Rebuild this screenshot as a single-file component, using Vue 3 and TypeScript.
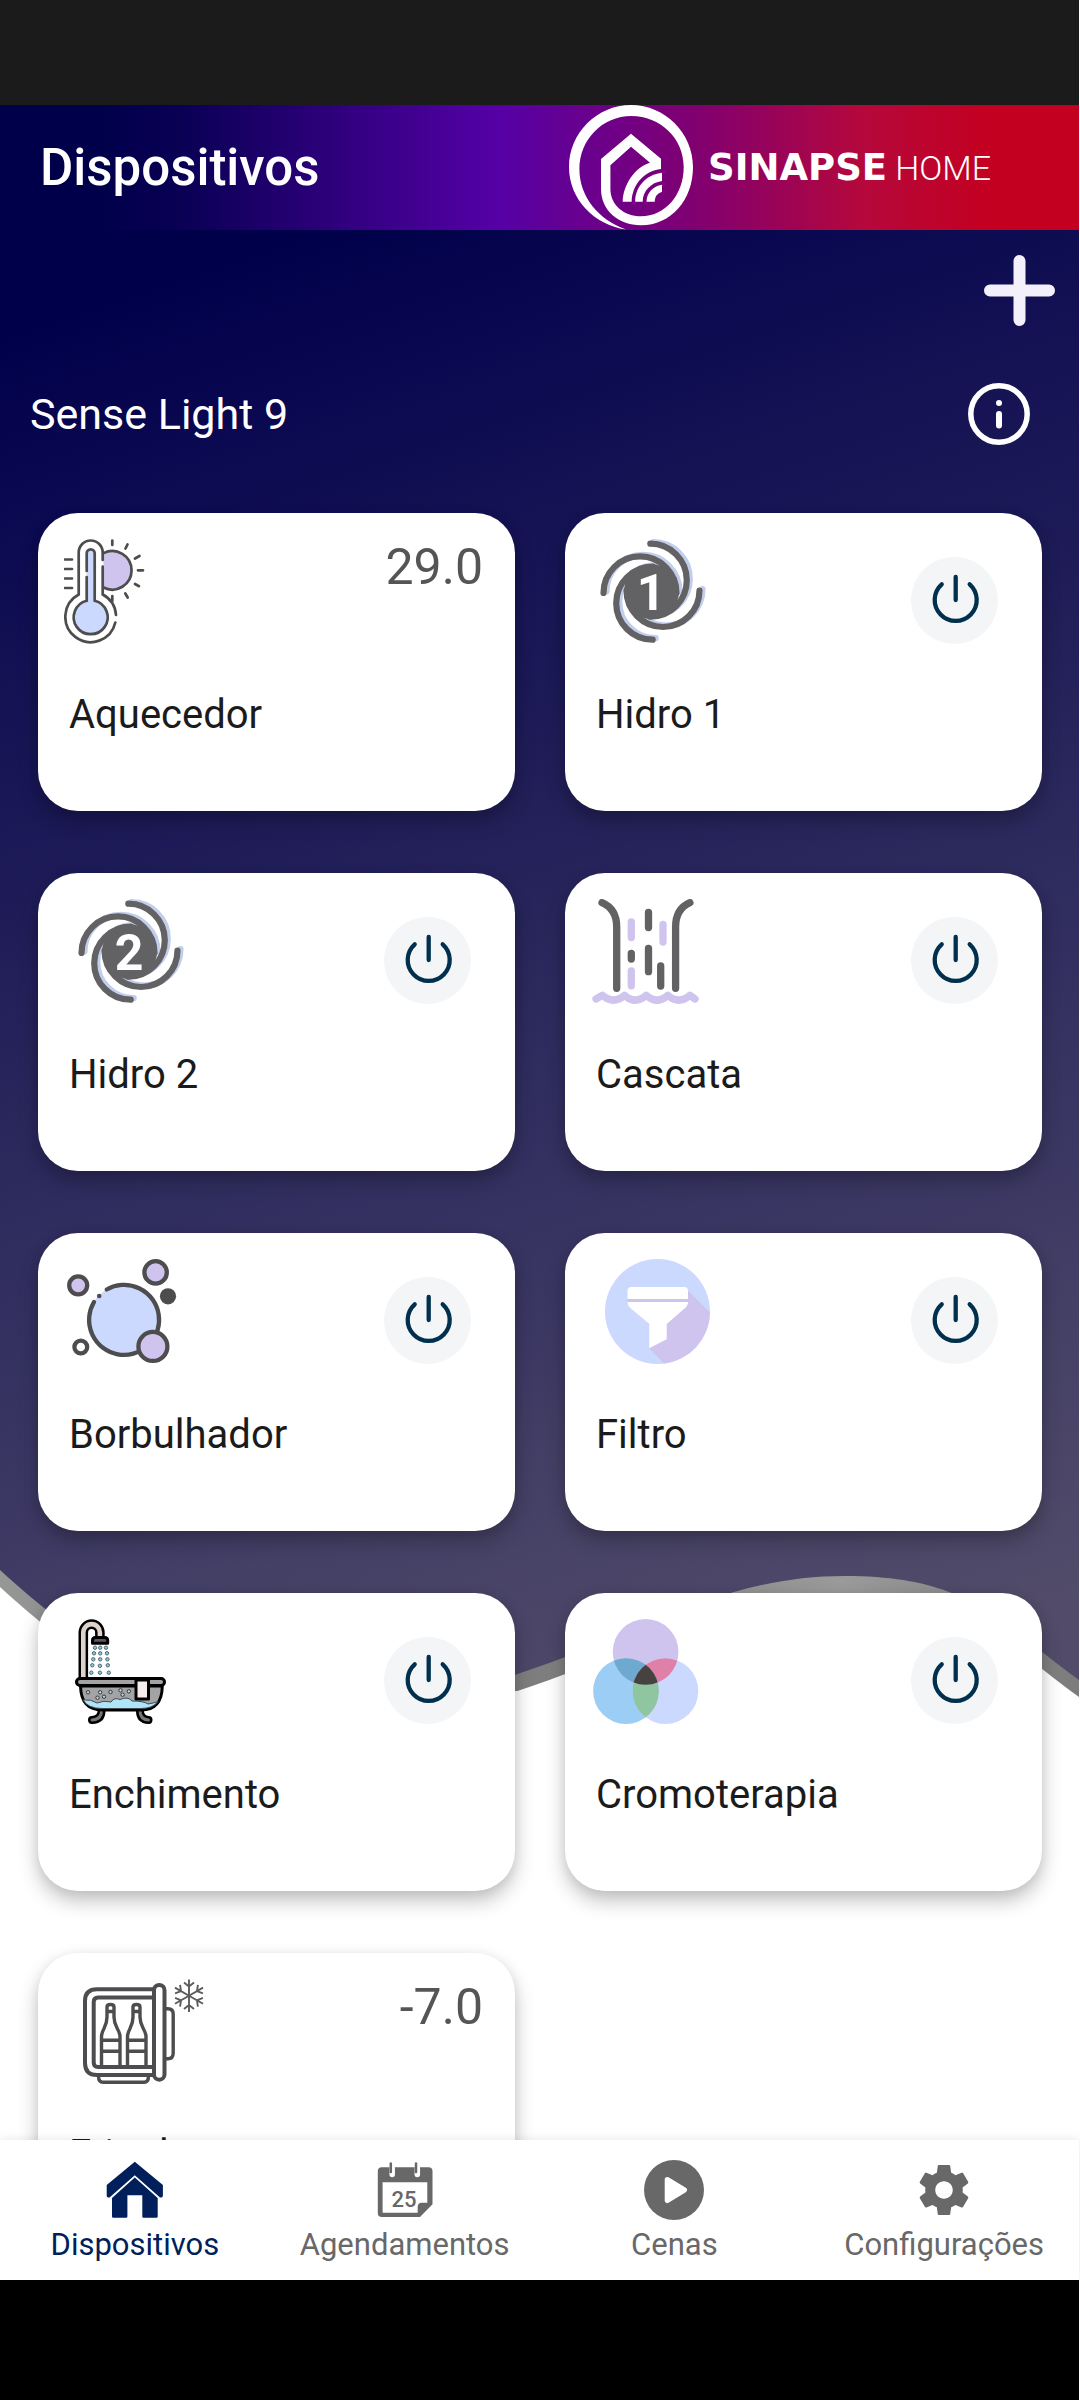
<script setup lang="ts">
import { ref } from 'vue'

type IconName =
  | 'heater'
  | 'swirl'
  | 'cascade'
  | 'bubbles'
  | 'filter'
  | 'bath'
  | 'color'
  | 'fridge'

interface Device {
  id: number
  name: string
  icon: IconName
  digit?: string
  value?: string
  on: boolean
}

const devices = ref<Device[]>([
  { id: 1, name: 'Aquecedor', icon: 'heater', value: '29.0', on: false },
  { id: 2, name: 'Hidro 1', icon: 'swirl', digit: '1', on: false },
  { id: 3, name: 'Hidro 2', icon: 'swirl', digit: '2', on: false },
  { id: 4, name: 'Cascata', icon: 'cascade', on: false },
  { id: 5, name: 'Borbulhador', icon: 'bubbles', on: false },
  { id: 6, name: 'Filtro', icon: 'filter', on: false },
  { id: 7, name: 'Enchimento', icon: 'bath', on: false },
  { id: 8, name: 'Cromoterapia', icon: 'color', on: false },
  { id: 9, name: 'Frigobar', icon: 'fridge', value: '-7.0', on: false },
])

const tabs = [
  { id: 'home', label: 'Dispositivos' },
  { id: 'calendar', label: 'Agendamentos' },
  { id: 'play', label: 'Cenas' },
  { id: 'gear', label: 'Configurações' },
]
const active = ref('home')

const quarterTurns = [0, 90, 180, 270]
const sixthTurns = [0, 60, 120, 180, 240, 300]
const drops: [number, number][] = [
  [31, 28.7], [36.2, 28.7], [42, 28.7],
  [30, 34.3], [36.2, 34.3], [43, 34.3],
  [29.3, 40.3], [36.2, 40.3], [43.4, 40.3],
  [28.3, 46.3], [35.9, 46.8], [43.8, 46.3],
  [27.3, 53.7], [35.9, 53.7], [44.8, 53.7],
]
const foam: [number, number][] = [
  [24, 73.3], [36.2, 73.3], [46.5, 73], [33.5, 78.7], [40, 77.7], [64.8, 72.3], [56.5, 71.3], [58.6, 75.7],
]
</script>

<template>
  <div class="app">
    <div class="status-bar"></div>

    <header class="header">
      <h1 class="title">Dispositivos</h1>
      <div class="brand">
        <svg class="brand-mark" viewBox="0 0 125 125" aria-hidden="true">
          <path d="M62 0C96 0 124 28 124 62C124 95 102 120.3 72 120.3C49 120.3 32 105 32 84V54L62 28.7L92 53.7V64C75 66 63 80 62.7 96.7H53.7C54 80 66 62 81 57.7L62 41.7L41.4 60.3V84C41.4 100 55 111.3 72 111.3C96 111.3 114.7 90 114.7 62C114.7 33 91 11 62.5 11C33 11 10.4 35 10.4 64C10.4 92 30 115 57 124.5C25 120 0 94 0 62C0 28 28 0 62 0Z" />
          <path d="M66.2 96.7C66.2 82 77 69.5 93 67.7V76C82 77.5 73.7 86 73.7 96.7Z" />
          <path d="M77.5 96.7C77.5 88 84 81 93 79.7V87C88.500 88 85.800 91.500 85.800 96.700Z" />
        </svg>
        <span class="brand-strong">SINAPSE</span>
        <span class="brand-light">HOME</span>
      </div>
    </header>

    <main class="content">
      <div class="scroll">
        <svg class="backdrop" viewBox="0 0 1080 1910" preserveAspectRatio="none" aria-hidden="true">
          <defs>
            <linearGradient id="night" gradientUnits="userSpaceOnUse" x1="0" y1="0" x2="514" y2="1556">
              <stop offset="0.06" stop-color="#00004a" />
              <stop offset="0.16" stop-color="#0a0850" />
              <stop offset="0.25" stop-color="#131153" />
              <stop offset="0.36" stop-color="#1b1956" />
              <stop offset="0.57" stop-color="#2e2b5e" />
              <stop offset="0.77" stop-color="#3e3a64" />
              <stop offset="0.84" stop-color="#454166" />
              <stop offset="1" stop-color="#524c6a" />
            </linearGradient>
            <linearGradient id="rim" x1="0" y1="0" x2="1" y2="0">
              <stop offset="0" stop-color="#969896" />
              <stop offset="0.1" stop-color="#888988" />
              <stop offset="0.5" stop-color="#7e7e7e" />
              <stop offset="0.78" stop-color="#9a9a9a" />
              <stop offset="1" stop-color="#7c7c7c" />
            </linearGradient>
          </defs>
          <path fill="url(#rim)" d="M0 1200V1357C120 1467 250 1537 515 1461L1080 1467V1200Z" />
          <path fill="#fff" d="M515 1462C640 1422 720 1363 846 1363S1000 1409 1080 1467V1500H515Z" />
          <path fill="url(#night)" d="M0 0V1340C120 1450 250 1520 515 1445C640 1405 720 1346 846 1346S1000 1392 1080 1450V0Z" />
        </svg>

        <div class="toolbar">
          <button class="plain-button" type="button" aria-label="Adicionar">
            <svg class="plus" viewBox="0 0 71 71" aria-hidden="true">
              <path d="M35.500 6V65M6 35.500H65" fill="none" stroke="#f3f0fc" stroke-width="12" stroke-linecap="round" />
            </svg>
          </button>
        </div>

        <div class="group-head">
          <h2 class="group-name">Sense Light 9</h2>
          <button class="plain-button" type="button" aria-label="Informações">
            <svg class="info" viewBox="0 0 62 62" aria-hidden="true">
              <g fill="none" stroke="#fff" stroke-linecap="round">
                <circle cx="31" cy="31" r="28.200" stroke-width="5.500" />
                <path d="M31 20V20.100M31 31V42.500" stroke-width="6" />
              </g>
            </svg>
          </button>
        </div>

        <div class="grid">
          <article v-for="d in devices" :key="d.id" class="card">
            <div class="card-top">
              <svg class="device-icon" viewBox="0 0 144 105" aria-hidden="true">
                <g v-if="d.icon === 'heater'" fill="none" stroke="#4d4d4d" stroke-width="2.7" stroke-linecap="round">
                  <path d="M39.500 14.100A19.300 19.300 0 1 1 39.500 48.500Z" fill="#cfc4ee" stroke="none" />
                  <path d="M39.500 14.100A19.300 19.300 0 1 1 39.500 48.500" />
                  <path d="M22.700 61.700V14.300a4 4 0 0 1 8 0V61.700A17 17 0 1 1 22.700 61.700Z" fill="#cbd9ff" stroke="none" />
                  <path d="M22.700 32V14.300a4 4 0 0 1 8 0V61.700A17 17 0 1 1 22.700 61.700V38" />
                  <path d="M38.700 21V13.500a12 12 0 0 0-24 0V55.500A25.300 25.300 0 1 0 51.300 83.500M52 76A25.300 25.300 0 0 0 38.700 55.500V27.500" />
                  <path d="M48.300 1.500V6M63.500 5.500L61.500 9.500M75.500 17L71 19.500M74 31.300H79M71 45L75 47.200M61.300 54.500L63.700 58.500M48.300 57V62" />
                  <path d="M1 20.500H8M1 30H8M1 39.500H8M1 49H8" />
                </g>

                <g v-else-if="d.icon === 'swirl'" :transform="d.digit === '1' ? 'translate(8 0)' : 'translate(13 0)'">
                  <g fill="none" stroke="#c3cdec" stroke-width="6.2" stroke-linecap="round" transform="translate(3 -1.500)">
                    <path v-for="a in quarterTurns" :key="a" d="M51.300 4.700A36.500 36.500 0 0 1 51.300 77.700" :transform="`rotate(${a} 52.500 52.700)`" />
                  </g>
                  <g fill="none" stroke="#626264" stroke-width="6.2" stroke-linecap="round">
                    <circle cx="52.500" cy="52.700" r="27.500" fill="#626264" stroke="none" />
                    <path v-for="a in quarterTurns" :key="a" d="M51.300 4.700A36.500 36.500 0 0 1 51.300 77.700" :transform="`rotate(${a} 52.500 52.700)`" />
                  </g>
                  <text class="swirl-digit" x="52" y="71" text-anchor="middle">{{ d.digit }}</text>
                </g>

                <g v-else-if="d.icon === 'cascade'" fill="none" stroke="#626264" stroke-width="7.3" stroke-linecap="round" stroke-linejoin="round">
                  <path d="M11 3.700Q25.700 10 25.700 28V89.300M98.900 3.700Q84.600 10 84.600 28V89.300" />
                  <path d="M57.500 13.500V28.500M40.300 54.500V60M57.500 49.500V72.700M69.700 67V87" />
                  <path stroke="#cfc4ee" d="M40.300 23V38.500M72 25.500V43M40.300 72V86.800" />
                  <path stroke="#cfc4ee" d="M5 100L11.500 96.200Q22.500 106 33.500 96.200Q44.300 106 55.200 96.200Q66 106 76.800 96.200Q88 106 98.900 96.200L104 100" />
                </g>

                <g v-else-if="d.icon === 'bubbles'" fill="#cfc4ee" stroke="#4d4d4f" stroke-width="4.3" stroke-linecap="round">
                  <circle cx="59.300" cy="61.300" r="35" fill="#cbd9ff" stroke="none" />
                  <path fill="none" d="M42.700 30.500A35 35 0 1 1 30 43" />
                  <circle cx="35.200" cy="37" r="2.300" fill="#4d4d4f" stroke="none" />
                  <circle cx="91.600" cy="13.400" r="11.200" />
                  <circle cx="14.200" cy="26.300" r="9" />
                  <circle cx="104" cy="37.300" r="8.100" fill="#4d4d4f" stroke="none" />
                  <circle cx="16.800" cy="88" r="6.400" fill="#fff" />
                  <circle cx="88.900" cy="87.400" r="14.500" />
                </g>

                <g v-else-if="d.icon === 'filter'">
                  <circle cx="66.500" cy="52.500" r="52.500" fill="#cbd9ff" />
                  <path fill="#cfc4ee" d="M97 31.500L119 53.500A52.500 52.500 0 0 1 73 104.600L58.200 89.300V66L36.500 44V38H97Z" />
                  <path fill="#fff" d="M36.500 40V32Q36.500 28 40.500 28H93Q97 28 97 32V40ZM36.500 43H97Q97 46.500 93.500 49.500L75.700 65V80.300L58.200 89.300V65L40 49.500Q36.500 46.500 36.500 43Z" />
                </g>

                <g v-else-if="d.icon === 'bath'" stroke="#000" stroke-width="3" stroke-linejoin="round">
                  <path fill="none" stroke-width="9.6" d="M19.300 60V13.400a8.300 8.300 0 0 1 16.600 0V18" />
                  <path fill="none" stroke="#ddd3cc" stroke-width="4.6" d="M19.300 60V13.400a8.300 8.300 0 0 1 16.600 0V18" />
                  <path fill="#5d5665" d="M28.500 24.200V21.500Q28.500 18.500 31.500 18.500H40.700Q43.700 18.500 43.700 21.500V24.200Z" />
                  <circle v-for="([x, y], i) in drops" :key="i" :cx="x" :cy="y" r="1.700" fill="#8ccbe0" stroke="#50666f" stroke-width="1" />
                  <g fill="none" stroke-linecap="round">
                    <path stroke-width="8" d="M37.500 92Q37.500 100.500 28 101M76 92Q76 100.500 84.500 101" />
                    <path stroke="#77777a" stroke-width="3" d="M37.500 92Q37.500 100.500 28 101M76 92Q76 100.500 84.500 101" />
                  </g>
                  <path fill="#a3a3a6" d="M16.500 67C17 84 24 91 38 91H77C91 91 98 84 98.300 67Z" />
                  <path fill="#aee3f8" stroke="#3f4a50" stroke-width="1" d="M19 81Q27 80 33 84Q40 81 47 83Q50 78 56 80.500Q64 77 68 82Q80 82 84 85Q90 84 94 82.500Q89 89.500 77 89.500H38Q24 89.500 19 81Z" />
                  <circle v-for="([x, y], i) in foam" :key="i" :cx="x" :cy="y" r="1.700" fill="#b9dbe6" stroke="#333" stroke-width="1" />
                  <rect x="12.500" y="59.500" width="88" height="7" rx="3.500" fill="#a3a3a6" />
                  <path fill="#f5ecec" d="M72 61H84.500V80H72Z" />
                </g>

                <g v-else-if="d.icon === 'color'">
                  <defs>
                    <clipPath id="clip-top"><circle cx="54.600" cy="32.900" r="32.900" /></clipPath>
                    <clipPath id="clip-left"><circle cx="35" cy="72.100" r="32.900" /></clipPath>
                  </defs>
                  <circle cx="54.600" cy="32.900" r="32.900" fill="#cfc4ee" />
                  <circle cx="35" cy="72.100" r="32.900" fill="#9ccdf5" />
                  <circle cx="74.400" cy="72.100" r="32.900" fill="#cbd9ff" />
                  <circle cx="35" cy="72.100" r="32.900" fill="#70a9cf" clip-path="url(#clip-top)" />
                  <circle cx="74.400" cy="72.100" r="32.900" fill="#df80a9" clip-path="url(#clip-top)" />
                  <g clip-path="url(#clip-left)">
                    <circle cx="74.400" cy="72.100" r="32.900" fill="#90c5a2" />
                    <circle cx="74.400" cy="72.100" r="32.900" fill="#474242" clip-path="url(#clip-top)" />
                  </g>
                </g>

                <g v-else fill="none" stroke="#4d4d4f" stroke-width="4">
                  <path d="M89 10.300H33Q21 10.300 21 22V84Q21 96 33 96H89" />
                  <path d="M89 18.500H34Q29.700 18.500 29.700 23V83.500Q29.700 88 34 88H89" />
                  <rect x="90" y="6" width="10.500" height="94.700" rx="5.200" fill="#fff" />
                  <path stroke-width="3.4" d="M102 29.700H104Q109.200 29.700 109.200 35V74Q109.200 79.700 104 79.700H102M34.500 97Q34.500 103.300 39 103.300H80Q84.500 103.300 84.500 97" />
                  <g v-for="dx in [0, 26]" :key="dx" :transform="`translate(${dx} 0)`" stroke-width="3.400">
                    <path d="M37.500 87V58C37.500 50 43 49 43 38V28Q43 25.500 46.500 25.500Q50 25.500 50 28V38C50 49 56 50 56 58V87M37.500 61.300H56M37.500 72.300H56M43 32.500H50" />
                  </g>
                  <g stroke-width="1.900" stroke="#5c5c5e">
                    <path v-for="a in sixthTurns" :key="a" d="M125 16.700V0.500M125 7.500L120 3.500M125 7.500L130 3.500" :transform="`rotate(${a} 125 16.700)`" />
                  </g>
                </g>
              </svg>

              <output v-if="d.value" class="reading">{{ d.value }}</output>
              <button
                v-else
                class="power"
                type="button"
                :aria-label="`Ligar ${d.name}`"
                :aria-pressed="d.on"
                @click="d.on = !d.on"
              >
                <svg class="power-icon" viewBox="0 0 87 87" aria-hidden="true">
                  <path d="M44.700 20V43M30.700 27.300A21 21 0 1 0 58.700 27.300" fill="none" stroke="#00304d" stroke-width="4.300" stroke-linecap="round" />
                </svg>
              </button>
            </div>
            <h3 class="device-name">{{ d.name }}</h3>
          </article>
        </div>
      </div>
    </main>

    <nav class="tabs">
      <a
        v-for="t in tabs"
        :key="t.id"
        class="tab"
        :class="{ 'tab-active': active === t.id }"
        :href="`#${t.id}`"
        @click.prevent="active = t.id"
      >
        <svg class="tab-icon" viewBox="0 0 60 60" aria-hidden="true">
          <g v-if="t.id === 'home'" fill="currentColor">
            <path d="M29.800 1.700L57.900 25V36Q57.500 38 55 37.500L29.800 15.200L4.500 37.500Q2 38 1.700 36V25Z" />
            <path d="M29.800 17.500L52.700 38V56.500Q52.700 57.700 51.500 57.700H38.500Q37.300 57.700 37.300 56.500V35.300H22.400V56.500Q22.400 57.700 21.200 57.700H8.200Q7 57.700 7 56.500V38Z" />
          </g>
          <g v-else-if="t.id === 'calendar'">
            <path fill="currentColor" fill-rule="evenodd" d="M6.800 7.300H53.500Q57.500 7.300 57.500 11.300V44.300L45 57H6.800Q2.800 57 2.800 53V11.300Q2.800 7.300 6.800 7.300ZM7.600 22.300V52.700H42.700V47Q42.700 42.700 46.800 42.700H52.300V22.300Z" />
            <path stroke="#fff" stroke-width="5.500" stroke-linecap="round" d="M17.200 8V14.500M42.300 8V14.500" />
            <path stroke="currentColor" stroke-width="2.500" stroke-linecap="round" d="M15.800 3.500V12M41 3.500V12" />
            <text class="tab-date" x="29" y="46.500" text-anchor="middle">25</text>
          </g>
          <g v-else-if="t.id === 'play'">
            <circle cx="30" cy="30" r="30" fill="currentColor" />
            <path fill="#fff" stroke="#fff" stroke-width="5" stroke-linejoin="round" d="M23.200 19.500L40.500 30L23.200 40.500Z" />
          </g>
          <g v-else fill="currentColor" transform="scale(2.500)">
            <path d="M19.430 12.980c.04-.32.07-.64.07-.98s-.03-.66-.07-.98l2.110-1.650c.19-.15.24-.42.12-.64l-2-3.460c-.12-.22-.39-.3-.61-.22l-2.490 1c-.52-.4-1.080-.73-1.690-.98l-.38-2.650C14.460 2.180 14.250 2 14 2h-4c-.25 0-.46.18-.49.42l-.38 2.650c-.61.25-1.170.59-1.690.98l-2.490-1c-.23-.09-.49 0-.61.22l-2 3.460c-.13.22-.07.49.12.64l2.110 1.650c-.04.32-.07.65-.07.98s.03.66.07.98l-2.110 1.650c-.19.15-.24.42-.12.64l2 3.460c.12.22.39.3.61.22l2.490-1c.52.4 1.080.73 1.690.98l.38 2.650c.03.24.24.42.49.42h4c.25 0 .46-.18.49-.42l.38-2.650c.61-.25 1.170-.59 1.690-.98l2.490 1c.23.09.49 0 .61-.22l2-3.460c.12-.22.07-.49-.12-.64l-2.110-1.650zM12 15.500c-1.930 0-3.500-1.570-3.500-3.500s1.570-3.500 3.500-3.500 3.500 1.570 3.500 3.500-1.570 3.500-3.500 3.500z" />
          </g>
        </svg>
        <span class="tab-label">{{ t.label }}</span>
      </a>
    </nav>

    <div class="system-bar"></div>
  </div>
</template>

<style>
body {
  margin: 0;
  background: #fff;
}
</style>

<style scoped>
.app {
  display: flex;
  flex-direction: column;
  height: 100vh;
  box-sizing: border-box;
  padding-right: 1px;
  font-family: Roboto, "Liberation Sans", sans-serif;
  background: #fff;
}

.status-bar {
  flex: none;
  height: 105px;
  background: #1b1b1b;
}

.header {
  flex: none;
  display: flex;
  align-items: center;
  justify-content: space-between;
  height: 125px;
  padding: 0 88px 0 40px;
  color: #fff;
  background: linear-gradient(90deg, #00004a 9%, #0a0055 17%, #5500a6 46%, #85006c 66%, #b5083c 80%, #c40020 92%);
}

.title {
  margin: 0;
  font-size: 51px;
  font-weight: 500;
  line-height: 60px;
}

.brand {
  display: flex;
  align-items: center;
}

.brand-mark {
  width: 125px;
  height: 125px;
  margin-right: 14px;
  fill: #fff;
}

.brand-strong {
  margin-right: 8px;
  font-family: "DejaVu Sans", sans-serif;
  font-size: 37px;
  font-weight: 700;
  line-height: 40px;
}

.brand-light {
  font-size: 34px;
  font-weight: 300;
  line-height: 40px;
}

.content {
  flex: 1;
  min-height: 0;
  overflow-y: auto;
  scrollbar-width: none;
}

.scroll {
  position: relative;
  z-index: 0;
}

.backdrop {
  position: absolute;
  z-index: -1;
  top: 0;
  left: 0;
  width: 100%;
  height: 1910px;
}

.toolbar {
  display: flex;
  align-items: center;
  justify-content: flex-end;
  height: 120px;
  padding-right: 24px;
}

.plain-button {
  display: flex;
  padding: 0;
  border: 0;
  background: none;
  cursor: pointer;
}

.plus {
  width: 71px;
  height: 71px;
}

.group-head {
  display: flex;
  align-items: center;
  justify-content: space-between;
  height: 128px;
  padding: 0 49px 0 30px;
}

.group-name {
  margin: 0;
  color: #fff;
  font-size: 43px;
  font-weight: 400;
  line-height: 48px;
}

.info {
  width: 62px;
  height: 62px;
}

.grid {
  display: grid;
  grid-template-columns: 1fr 1fr;
  gap: 62px 50px;
  padding: 35px 37px 48px 38px;
}

.card {
  padding: 26px 32px 72px 26px;
  border-radius: 40px;
  background: #fff;
  box-shadow: 0 10px 20px rgba(0, 0, 0, 0.24), 0 2px 12px rgba(0, 0, 0, 0.06);
}

.card-top {
  display: flex;
  align-items: flex-end;
  justify-content: space-between;
  height: 105px;
}

.device-icon {
  width: 144px;
  height: 105px;
}

.swirl-digit {
  fill: #fff;
  font-size: 50px;
  font-weight: 700;
}

.reading {
  align-self: flex-start;
  color: #555;
  font-size: 50px;
  line-height: 56px;
}

.power {
  width: 87px;
  height: 87px;
  margin-right: 12px;
  padding: 0;
  border: 0;
  border-radius: 50%;
  background: #f3f5f7;
  cursor: pointer;
}

.power-icon {
  display: block;
  width: 87px;
  height: 87px;
}

.device-name {
  margin: 47px 0 0 5px;
  color: #1b1b1b;
  font-size: 40px;
  font-weight: 400;
  line-height: 48px;
}

.tabs {
  flex: none;
  position: relative;
  display: flex;
  height: 140px;
  background: #fff;
  box-shadow: 0 0 10px rgba(0, 0, 0, 0.1);
}

.tab {
  flex: 1 1 0;
  display: flex;
  flex-direction: column;
  align-items: center;
  padding-top: 20px;
  color: #686868;
  text-decoration: none;
}

.tab-active {
  color: #001f5b;
}

.tab-icon {
  width: 60px;
  height: 60px;
}

.tab-date {
  fill: currentColor;
  font-size: 22px;
  font-weight: 500;
}

.tab-label {
  margin-top: 7px;
  font-size: 31px;
  line-height: 36px;
}

.system-bar {
  flex: none;
  position: relative;
  height: 120px;
  background: #000;
}
</style>
